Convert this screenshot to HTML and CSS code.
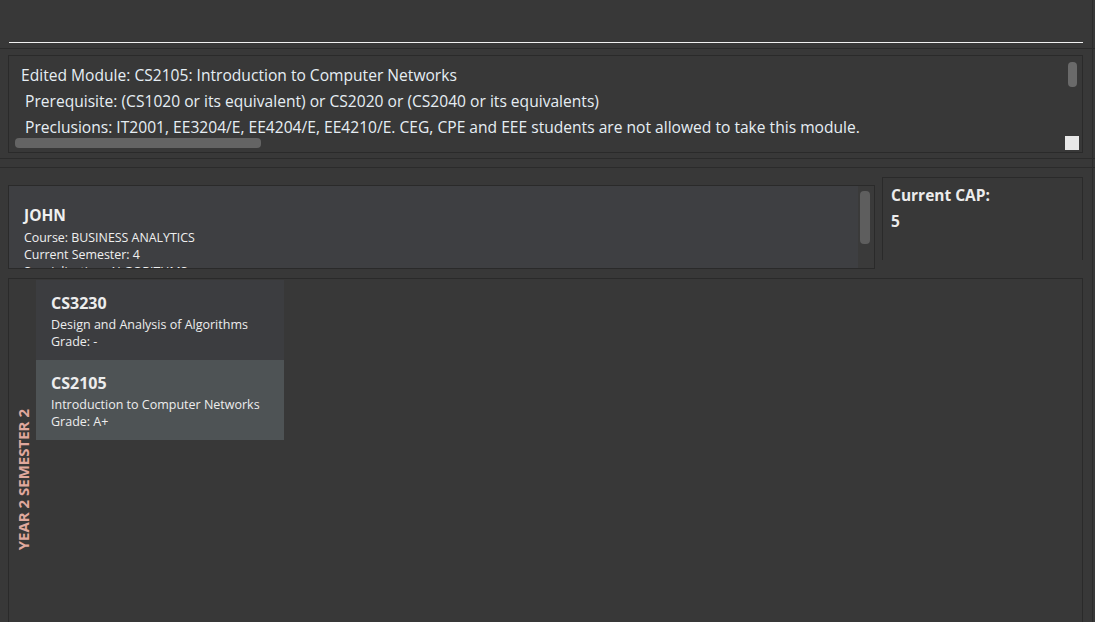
FILE: index.html
```html
<!DOCTYPE html>
<html>
<head>
<meta charset="utf-8">
<link rel="stylesheet" href="styles.css">
</head>
<body>
<div class="app">
  <div class="command-area">
    <div class="command-input"></div>
  </div>
  <div class="result-wrap">
    <div class="result-box">
      <div class="result-text">
        <div class="r1">Edited Module: CS2105: Introduction to Computer Networks</div>
        <div class="r2">Prerequisite: (CS1020 or its equivalent) or CS2020 or (CS2040 or its equivalents)</div>
        <div class="r2">Preclusions: IT2001, EE3204/E, EE4204/E, EE4210/E. CEG, CPE and EEE students are not allowed to take this module.</div>
      </div>
      <div class="vthumb"></div>
      <div class="hthumb"></div>
      <div class="corner"></div>
    </div>
  </div>
  <div class="sep"></div>
  <div class="main">
    <div class="top-row">
      <div class="student-list">
        <div class="student-card">
          <div class="name">JOHN</div>
          <div class="info">Course: BUSINESS ANALYTICS</div>
          <div class="info">Current Semester: 4</div>
          <div class="info">Specialisation: ALGORITHMS</div>
        </div>
        <div class="vtrack"><div class="vtrack-thumb"></div></div>
      </div>
      <div class="cap-panel">
        <div class="cap-title">Current CAP:</div>
        <div class="cap-value">5</div>
      </div>
    </div>
    <div class="semester-panel">
      <div class="sem-label"><span>YEAR 2 SEMESTER 2</span></div>
      <div class="module-list">
        <div class="module-card">
          <div class="code">CS3230</div>
          <div class="mtext">Design and Analysis of Algorithms</div>
          <div class="mtext">Grade: -</div>
        </div>
        <div class="module-card selected">
          <div class="code">CS2105</div>
          <div class="mtext">Introduction to Computer Networks</div>
          <div class="mtext">Grade: A+</div>
        </div>
      </div>
    </div>
  </div>
  <div class="edge"></div>
</div>
</body>
</html>
```

FILE: styles.css
```css
html, body {
  margin: 0;
  padding: 0;
  background: #383838;
  width: 1095px;
  height: 622px;
  overflow: hidden;
  font-family: "Open Sans", "Noto Sans", sans-serif;
}

.app {
  position: relative;
  display: flex;
  flex-direction: column;
  height: 622px;
  overflow: hidden;
}

.app > * {
  flex-shrink: 0;
}

.edge {
  position: absolute;
  right: 2px;
  top: 0;
  bottom: 0;
  width: 1px;
  background: #2c2c2c;
}

.command-area {
  height: 48px;
  border-bottom: 1px solid #2b2b2b;
  padding: 0 12px 0 9px;
}

.command-input {
  height: 42px;
  border-bottom: 1px solid #f2f2f2;
}

.result-wrap {
  padding: 6px 12px 5px 8px;
  border-bottom: 1px solid #2b2b2b;
}

.result-box {
  position: relative;
  height: 98px;
  box-sizing: border-box;
  border: 1px solid #2a2a2a;
  overflow: hidden;
}

.result-text {
  padding: 6px 0 0 12px;
  color: #e6eef4;
  font-size: 15.6px;
  line-height: 26px;
  white-space: nowrap;
}

.result-text .r2 {
  padding-left: 4px;
}

.vthumb {
  position: absolute;
  right: 5px;
  top: 6px;
  width: 9px;
  height: 25px;
  border-radius: 4px;
  background: #6a6a6a;
}

.hthumb {
  position: absolute;
  left: 6px;
  top: 82px;
  width: 246px;
  height: 10px;
  border-radius: 4px;
  background: #646464;
}

.corner {
  position: absolute;
  right: 3px;
  bottom: 2px;
  width: 14px;
  height: 14px;
  background: #e8e8e8;
}

.sep {
  height: 8px;
  border-bottom: 1px solid #2b2b2b;
}

.main {
  display: flex;
  flex-direction: column;
  padding: 9px 12px 0 8px;
  gap: 9px;
}

.top-row {
  display: flex;
  height: 92px;
  gap: 7px;
  flex-shrink: 0;
}

.student-list {
  margin-top: 8px;
  width: 867px;
  height: 84px;
  box-sizing: border-box;
  border: 1px solid #2a2a2a;
  display: flex;
  overflow: hidden;
}

.student-card {
  flex: 1;
  background: #3e3f42;
  padding: 18px 15px 0;
  color: #f0f0f0;
}

.name {
  font-weight: 700;
  font-size: 15.5px;
  line-height: 22px;
  margin-bottom: 3px;
}

.info {
  font-size: 12.4px;
  line-height: 17px;
}

.vtrack {
  width: 16px;
  background: #3a3a3a;
  padding-top: 5px;
  box-sizing: border-box;
}

.vtrack-thumb {
  margin-left: 2px;
  width: 10px;
  height: 53px;
  border-radius: 4px;
  background: #5e5e5e;
}

.cap-panel {
  width: 201px;
  height: 83px;
  box-sizing: border-box;
  border: 1px solid #2a2a2a;
  border-bottom: none;
  padding: 4px 8px;
  color: #ececec;
  font-weight: 700;
  font-size: 15.5px;
  line-height: 26px;
}

.semester-panel {
  display: flex;
  height: 400px;
  flex-shrink: 0;
  border: 1px solid #2a2a2a;
  padding-top: 1px;
}

.sem-label {
  width: 27px;
  display: flex;
  align-items: center;
  justify-content: center;
}

.sem-label span {
  writing-mode: vertical-rl;
  transform: rotate(180deg);
  color: #e0a89d;
  font-weight: 700;
  font-size: 15px;
  white-space: nowrap;
}

.module-list {
  display: flex;
  flex-direction: column;
  width: 248px;
}

.module-card {
  height: 80px;
  box-sizing: border-box;
  background: #3c3d40;
  padding: 12px 15px 0;
  color: #ededed;
}

.module-card.selected {
  background: #4e5355;
}

.code {
  font-weight: 700;
  font-size: 16px;
  line-height: 23px;
  margin-bottom: 1px;
}

.mtext {
  font-size: 12.5px;
  line-height: 17px;
}
```
